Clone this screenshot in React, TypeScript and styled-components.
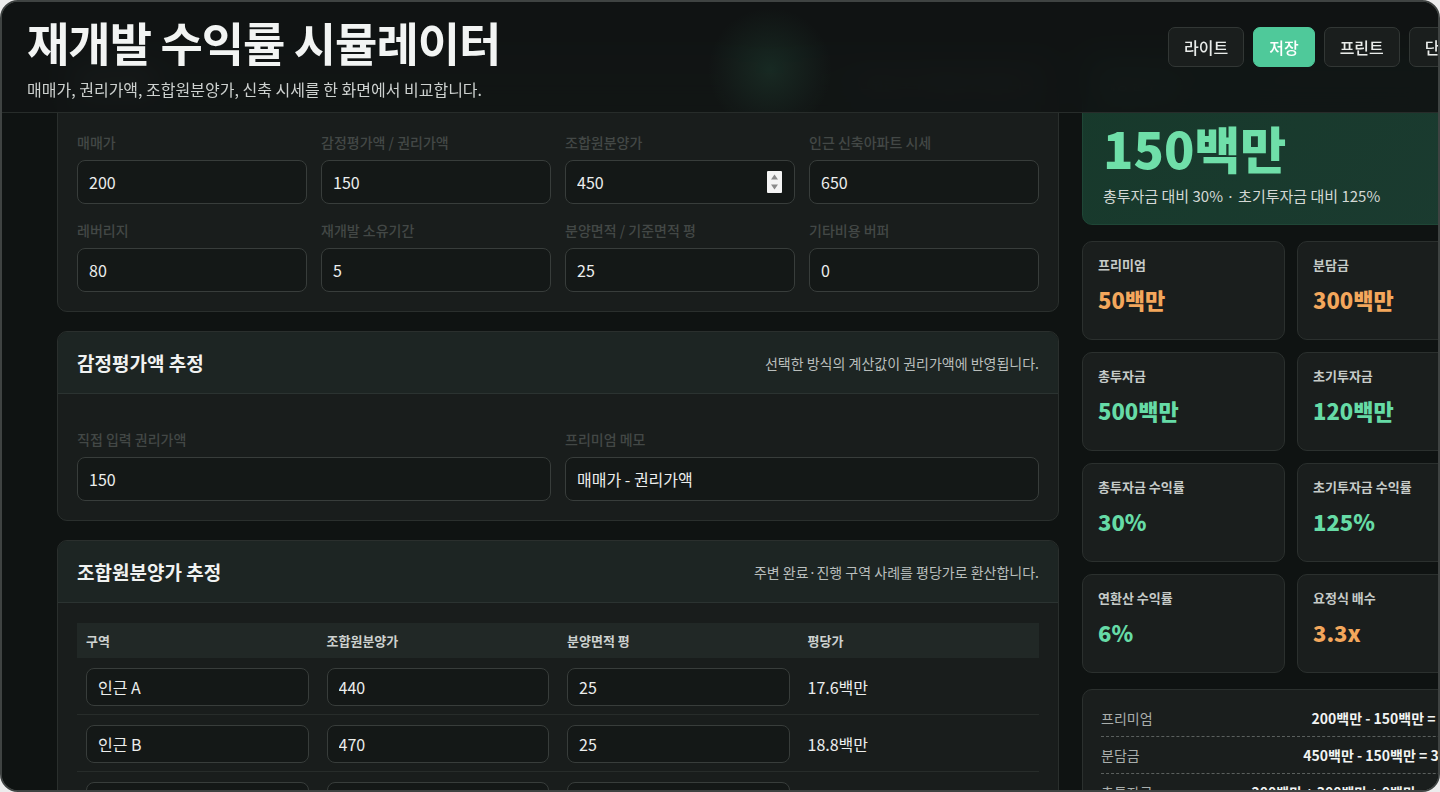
import React, { useLayoutEffect, useRef } from "react"
import styled, { createGlobalStyle } from "styled-components"

const GlobalStyle = createGlobalStyle`
    html, body {
        margin: 0;
        height: 100%;
        background: #ececec;
    }
    body {
        font-family: "Noto Sans CJK KR", "Noto Sans", sans-serif;
        color: #e8ebea;
    }
    #root {
        height: 100%;
    }
    * {
        box-sizing: border-box;
    }
`

const basics = [
    { label: "매매가", value: "200" },
    { label: "감정평가액 / 권리가액", value: "150" },
    { label: "조합원분양가", value: "450", spin: true },
    { label: "인근 신축아파트 시세", value: "650" },
    { label: "레버리지", value: "80" },
    { label: "재개발 소유기간", value: "5" },
    { label: "분양면적 / 기준면적 평", value: "25" },
    { label: "기타비용 버퍼", value: "0" },
]

const cases = [
    { name: "인근 A", price: "440", area: "25", unit: "17.6백만" },
    { name: "인근 B", price: "470", area: "25", unit: "18.8백만" },
    { name: "인근 C", price: "500", area: "25", unit: "20백만" },
]

const stats = [
    { label: "프리미엄", value: "50백만", tone: "orange" },
    { label: "분담금", value: "300백만", tone: "orange" },
    { label: "총투자금", value: "500백만", tone: "mint" },
    { label: "초기투자금", value: "120백만", tone: "mint" },
    { label: "총투자금 수익률", value: "30%", tone: "mint" },
    { label: "초기투자금 수익률", value: "125%", tone: "mint" },
    { label: "연환산 수익률", value: "6%", tone: "mint" },
    { label: "요정식 배수", value: "3.3x", tone: "orange" },
]

const breakdown = [
    { label: "프리미엄", value: "200백만 - 150백만 = 50백만" },
    { label: "분담금", value: "450백만 - 150백만 = 300백만" },
    { label: "총투자금", value: "200백만 + 300백만 + 0백만 = 500백만" },
    { label: "초기투자금", value: "200백만 - 80백만 = 120백만" },
]

const Spinner = () => (
    <SpinBox>
        <svg width="15" height="22" viewBox="0 0 15 22">
            <rect width="15" height="22" rx="1" fill="#f4f4f4" />
            <path d="M7.5 3.5 L11 8.5 L4 8.5 Z" fill="#8a8a8a" />
            <path d="M7.5 18.5 L11 13.5 L4 13.5 Z" fill="#8a8a8a" />
        </svg>
    </SpinBox>
)

export default function App() {
    const scroller = useRef<HTMLDivElement>(null)

    // the page is shown scrolled a little, under the sticky header
    useLayoutEffect(() => {
        if (scroller.current) scroller.current.scrollTop = 87
    }, [])

    return (
        <>
            <GlobalStyle />
            <Frame>
                <Scroller ref={scroller}>
                    <Page>
                        <Header>
                            <div>
                                <Title>재개발 수익률 시뮬레이터</Title>
                                <Subtitle>매매가, 권리가액, 조합원분양가, 신축 시세를 한 화면에서 비교합니다.</Subtitle>
                            </div>
                            <Actions>
                                <Button>라이트</Button>
                                <Button $primary>저장</Button>
                                <Button>프린트</Button>
                                <Button>단축키 안내</Button>
                            </Actions>
                        </Header>

                        <Main>
                            <Column>
                                <Card>
                                    <CardHead>
                                        <CardTitle>기본 입력</CardTitle>
                                        <CardNote>단위는 모두 백만원 기준입니다.</CardNote>
                                    </CardHead>
                                    <CardBody>
                                        <FieldGrid $cols={4}>
                                            {basics.map((f) => (
                                                <Field key={f.label}>
                                                    <Label>{f.label}</Label>
                                                    <InputWrap>
                                                        <Input defaultValue={f.value} />
                                                        {f.spin && <Spinner />}
                                                    </InputWrap>
                                                </Field>
                                            ))}
                                        </FieldGrid>
                                    </CardBody>
                                </Card>

                                <Card>
                                    <CardHead>
                                        <CardTitle>감정평가액 추정</CardTitle>
                                        <CardNote>선택한 방식의 계산값이 권리가액에 반영됩니다.</CardNote>
                                    </CardHead>
                                    <CardBody $top={36}>
                                        <FieldGrid $cols={2}>
                                            <Field>
                                                <Label>직접 입력 권리가액</Label>
                                                <Input defaultValue="150" />
                                            </Field>
                                            <Field>
                                                <Label>프리미엄 메모</Label>
                                                <Input defaultValue="매매가 - 권리가액" />
                                            </Field>
                                        </FieldGrid>
                                    </CardBody>
                                </Card>

                                <Card>
                                    <CardHead>
                                        <CardTitle>조합원분양가 추정</CardTitle>
                                        <CardNote>주변 완료·진행 구역 사례를 평당가로 환산합니다.</CardNote>
                                    </CardHead>
                                    <CardBody>
                                        <Table>
                                            <thead>
                                                <tr>
                                                    <Th>구역</Th>
                                                    <Th>조합원분양가</Th>
                                                    <Th>분양면적 평</Th>
                                                    <Th>평당가</Th>
                                                </tr>
                                            </thead>
                                            <tbody>
                                                {cases.map((c) => (
                                                    <tr key={c.name}>
                                                        <Td><Input $small defaultValue={c.name} /></Td>
                                                        <Td><Input $small defaultValue={c.price} /></Td>
                                                        <Td><Input $small defaultValue={c.area} /></Td>
                                                        <Td>{c.unit}</Td>
                                                    </tr>
                                                ))}
                                            </tbody>
                                        </Table>
                                    </CardBody>
                                </Card>
                            </Column>

                            <Side>
                                <Hero>
                                    <HeroLabel>예상 순수익</HeroLabel>
                                    <HeroValue>150백만</HeroValue>
                                    <HeroSub>총투자금 대비 30% · 초기투자금 대비 125%</HeroSub>
                                </Hero>

                                <StatGrid>
                                    {stats.map((s) => (
                                        <Stat key={s.label}>
                                            <StatLabel>{s.label}</StatLabel>
                                            <StatValue $tone={s.tone}>{s.value}</StatValue>
                                        </Stat>
                                    ))}
                                </StatGrid>

                                <Breakdown>
                                    {breakdown.map((b) => (
                                        <BreakRow key={b.label}>
                                            <BreakLabel>{b.label}</BreakLabel>
                                            <BreakValue>{b.value}</BreakValue>
                                        </BreakRow>
                                    ))}
                                </Breakdown>
                            </Side>
                        </Main>
                    </Page>
                </Scroller>
            </Frame>
        </>
    )
}

const Frame = styled.div`
    height: 100vh;
    border: 2px solid #3f4342;
    border-radius: 18px;
    overflow: hidden;
    background: #0f1312;
`

const Scroller = styled.div`
    height: 100%;
    overflow: hidden;
`

const Page = styled.div`
    width: 1560px;
    min-height: 1400px;
    background: #0f1312;
`

const Header = styled.header`
    position: sticky;
    top: 0;
    z-index: 5;
    display: flex;
    justify-content: space-between;
    align-items: flex-start;
    padding: 12px 44px 12px 25px;
    border-bottom: 1px solid #272c2a;
    background:
        radial-gradient(circle at 768px 68px, rgba(60, 150, 108, 0.16), transparent 62px),
        rgba(16, 20, 19, 0.92);
    backdrop-filter: blur(14px);
`

const Title = styled.h1`
    margin: 0;
    font-size: 46px;
    line-height: 55px;
    font-weight: 700;
    letter-spacing: -1px;
    color: #f2f4f3;
`

const Subtitle = styled.p`
    margin: 9px 0 0;
    font-size: 16px;
    line-height: 22px;
    color: #cdd1cf;
`

const Actions = styled.div`
    display: flex;
    gap: 9px;
    margin-top: 13px;
`

const Button = styled.button<{ $primary?: boolean }>`
    height: 40px;
    padding: 0 15px;
    border-radius: 7px;
    border: 1px solid ${(p) => (p.$primary ? "#4fc99a" : "#323735")};
    background: ${(p) => (p.$primary ? "#4fc99a" : "#1a1e1d")};
    color: ${(p) => (p.$primary ? "#ffffff" : "#e9ecea")};
    font-family: inherit;
    font-size: 16px;
    font-weight: 500;
`

const Main = styled.main`
    display: grid;
    grid-template-columns: 1002px 418px;
    gap: 23px;
    align-items: start;
    padding: 24px 55px 40px;
`

const Column = styled.div`
    display: flex;
    flex-direction: column;
    gap: 19px;
`

const Card = styled.section`
    background: #191d1c;
    border: 1px solid #2a2f2d;
    border-radius: 10px;
    overflow: hidden;
`

const CardHead = styled.div`
    display: flex;
    justify-content: space-between;
    align-items: center;
    height: 62px;
    padding: 0 19px;
    background: #1d2523;
    border-bottom: 1px solid #2b3331;
`

const CardTitle = styled.h2`
    margin: 0;
    font-size: 19px;
    font-weight: 700;
    color: #f0f2f1;
`

const CardNote = styled.span`
    font-size: 14px;
    color: #b9bebc;
`

const CardBody = styled.div<{ $top?: number }>`
    padding: ${(p) => p.$top ?? 20}px 19px 19px;
`

const FieldGrid = styled.div<{ $cols: number }>`
    display: grid;
    grid-template-columns: repeat(${(p) => p.$cols}, 1fr);
    column-gap: 14px;
    row-gap: 17px;
`

const Field = styled.label`
    display: flex;
    flex-direction: column;
    gap: 9px;
`

const Label = styled.span`
    font-size: 14px;
    line-height: 18px;
    font-weight: 500;
    color: #434846;
`

const InputWrap = styled.div`
    position: relative;
`

const Input = styled.input<{ $small?: boolean }>`
    width: 100%;
    height: ${(p) => (p.$small ? 38 : 44)}px;
    padding: 0 11px;
    background: #141817;
    border: 1px solid #383d3b;
    border-radius: 8px;
    color: #eceeed;
    font-family: inherit;
    font-size: 16px;
    outline: none;
`

const SpinBox = styled.span`
    position: absolute;
    right: 13px;
    top: 11px;
    display: flex;
`

const Table = styled.table`
    width: 100%;
    border-collapse: collapse;
    table-layout: fixed;
`

const Th = styled.th`
    height: 35px;
    padding: 0 9px;
    background: #212826;
    text-align: left;
    font-size: 13px;
    font-weight: 700;
    color: #cdd1cf;
`

const Td = styled.td`
    padding: 10px 9px 8px;
    border-bottom: 1px solid #272c2a;
    font-size: 16px;
    color: #eceeed;
`

const Side = styled.aside`
    display: flex;
    flex-direction: column;
    gap: 16px;
`

const Hero = styled.div`
    padding: 22px 20px 17px;
    border-radius: 10px;
    border: 1px solid #1f4636;
    background: linear-gradient(135deg, #17392b, #1b3b30);
`

const HeroLabel = styled.div`
    font-size: 14px;
    line-height: 20px;
    color: #b9d8c8;
    margin-bottom: 24px;
`

const HeroValue = styled.div`
    font-size: 50px;
    line-height: 60px;
    font-weight: 900;
    color: #6fdfa9;
`

const HeroSub = styled.div`
    margin-top: 8px;
    font-size: 15px;
    line-height: 22px;
    color: #d3d8d5;
`

const StatGrid = styled.div`
    display: grid;
    grid-template-columns: 1fr 1fr;
    gap: 12px;
`

const Stat = styled.div`
    height: 99px;
    padding: 14px 15px;
    background: #1a1e1d;
    border: 1px solid #2b302e;
    border-radius: 10px;
    display: flex;
    flex-direction: column;
    gap: 11px;
`

const StatLabel = styled.div`
    font-size: 13px;
    line-height: 18px;
    font-weight: 700;
    color: #c6cbc8;
`

const StatValue = styled.div<{ $tone: string }>`
    font-size: 22px;
    line-height: 28px;
    font-weight: 900;
    color: ${(p) => (p.$tone === "orange" ? "#f3a75c" : "#66dba6")};
`

const Breakdown = styled.div`
    padding: 10px 18px;
    background: #1a1e1d;
    border: 1px solid #2b302e;
    border-radius: 10px;
`

const BreakRow = styled.div`
    display: flex;
    justify-content: space-between;
    align-items: center;
    padding: 8px 0;
    border-bottom: 1px dashed #5a5f5d;
    font-size: 14px;
    line-height: 20px;
`

const BreakLabel = styled.span`
    color: #a9aeac;
`

const BreakValue = styled.span`
    font-weight: 700;
    color: #f1f3f2;
`
